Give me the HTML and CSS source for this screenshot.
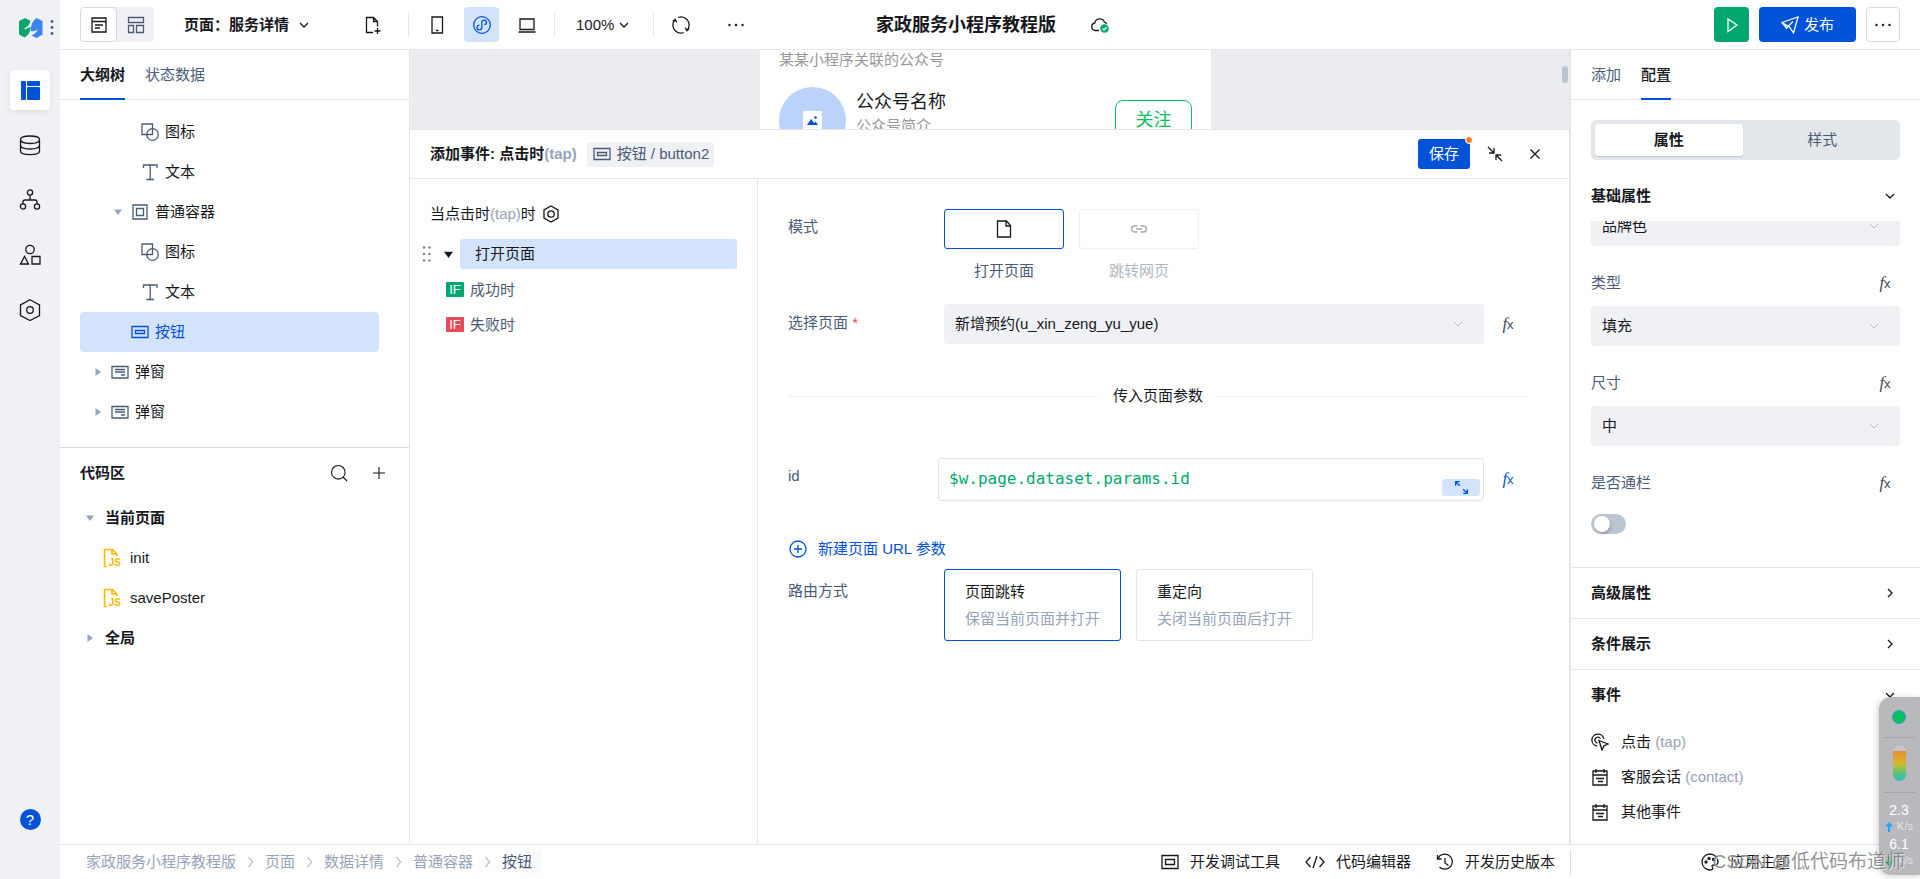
FILE: index.html
```html
<!DOCTYPE html>
<html lang="zh-CN">
<head>
<meta charset="utf-8">
<title>家政服务小程序教程版</title>
<link rel="stylesheet" href="styles.css">
</head>
<body>
<svg class="sprite" aria-hidden="true">
  <symbol id="chev-down" viewBox="0 0 10 10"><path d="M1 3l4 4 4-4"/></symbol>
  <symbol id="chev-right" viewBox="0 0 10 10"><path d="M3 1l4 4-4 4"/></symbol>
  <symbol id="crumb" viewBox="0 0 8 14"><path d="M2 2l4 5-4 5"/></symbol>
  <symbol id="caret-down" viewBox="0 0 8 8"><path d="M0 1.500h8L4 7z" fill="currentColor" stroke="none"/></symbol>
  <symbol id="caret-right" viewBox="0 0 8 8"><path d="M1.500 0v8L7 4z" fill="currentColor" stroke="none"/></symbol>
  <symbol id="page" viewBox="0 0 18 18"><path d="M2 2h14v14H2zM2 5.500h14M5 9h8M5 12h5"/></symbol>
  <symbol id="blocks" viewBox="0 0 18 18"><path d="M1.500 1.500h15v5h-15zM1.500 9.500h5v7h-5zM9.500 9.500h7v7h-7z"/></symbol>
  <symbol id="file-plus" viewBox="0 0 18 18"><path d="M9 16.500H2.500v-15h7l4 4v5M9.500 1.500v4h4M13.500 12v6M10.500 15h6"/></symbol>
  <symbol id="phone" viewBox="0 0 18 18"><path d="M4 1h10.500v16H4zM8 14.500h2.500"/></symbol>
  <symbol id="mini" viewBox="0 0 18 18"><circle cx="9" cy="9" r="8.300"/><path d="M6.500 9.200c-1.700.2-2.500 1.200-2.500 2.200a2.300 2.300 0 0 0 4.800 0V6.500a2.300 2.300 0 0 1 4.700 0c0 1-.8 2-2.300 2.200"/></symbol>
  <symbol id="laptop" viewBox="0 0 18 18"><path d="M2 3h14v10.500H2zM.5 16h17"/></symbol>
  <symbol id="refresh" viewBox="0 0 18 18"><path d="M6 16.500A8 8 0 0 1 3 3.700M6.200 1.500a8 8 0 0 1 8.500 1.800M12 1.500a8 8 0 0 1 3 12.800M11.800 16.500a8 8 0 0 1-8.500-1.800M.8 5.500L3 3.400l1.800 3M17.200 12.500L15 14.600l-1.800-3"/></symbol>
  <symbol id="dots" viewBox="0 0 18 18"><g fill="currentColor" stroke="none"><circle cx="2.500" cy="9" r="1.200"/><circle cx="9" cy="9" r="1.200"/><circle cx="15.500" cy="9" r="1.200"/></g></symbol>
  <symbol id="cloud" viewBox="0 0 20 18"><path d="M9 14.500H5A3.800 3.800 0 0 1 4.800 7a5 5 0 0 1 9.600-.8 4 4 0 0 1 2.400 1.600"/><circle cx="14.500" cy="12.500" r="4.300" fill="#00a870" stroke="none"/><path d="M12.500 12.500l1.500 1.500 2.700-2.700" stroke="#fff"/></symbol>
  <symbol id="play" viewBox="0 0 18 18"><path d="M5 3l9 6-9 6.500z"/></symbol>
  <symbol id="send" viewBox="0 0 18 18"><path d="M1 6.500L17 1l-4.500 16L8.500 11zM1 6.500l4.500 5.500 6.500-6.500M5.500 12v1"/></symbol>
  <symbol id="db" viewBox="0 0 22 22"><path d="M1.500 5.500C1.500 3 5 2 11 2s9.500 1 9.500 3.500S17 9.500 11 9.500 1.500 8 1.500 5.500zM1.500 5.500V17c0 2.500 3.500 3.700 9.500 3.700s9.500-1.200 9.500-3.700V5.500M1.500 11c0 2.500 3.500 4 9.500 4s9.500-1.500 9.500-4"/></symbol>
  <symbol id="flow" viewBox="0 0 22 22"><circle cx="11" cy="3.500" r="2.600"/><circle cx="4" cy="17.500" r="2.600"/><circle cx="18" cy="17.500" r="2.600"/><path d="M11 6v5M4 15v-2q0-2 2-2h10q2 0 2 2v2"/></symbol>
  <symbol id="shapes" viewBox="0 0 22 22"><circle cx="11" cy="5.500" r="4.200"/><path d="M1.500 20l4-7.500 4 7.500zM13 12.500h8V20h-8z"/></symbol>
  <symbol id="hex" viewBox="0 0 22 22"><path d="M11 .8l9.500 5.200v10.500L11 21.500 1.500 16.500V6z"/><circle cx="11" cy="11" r="3.300"/></symbol>
  <symbol id="hex-bold" viewBox="0 0 18 18"><path d="M9 1l7 4v8l-7 4-7-4V5z"/><circle cx="9" cy="9" r="3.200"/></symbol>
  <symbol id="icon-item" viewBox="0 0 18 18"><path d="M6 11.500H1V1h10.500v4"/><circle cx="11.500" cy="11.500" r="5.800"/><path d="M11.500 5v6.500H6"/></symbol>
  <symbol id="text-item" viewBox="0 0 18 18"><path d="M2.500 5V2h13.500v3M9.200 2v14.500M5.500 16.500h7.500"/></symbol>
  <symbol id="box-item" viewBox="0 0 18 18"><path d="M2 2h14v14H2zM5.500 5.500h7v7h-7z"/></symbol>
  <symbol id="button-item" viewBox="0 0 18 18"><path d="M1 3.500h16v11H1zM4.500 7.500h9v3h-9z"/></symbol>
  <symbol id="tool-item" viewBox="0 0 18 18"><path d="M1 2.500h16v13H1zM4.500 6.500h9v5h-9z"/></symbol>
  <symbol id="popup-item" viewBox="0 0 18 18"><path d="M1 3.500h16v11.500H1zM4 6.500h10M4 9h10M10 12h4"/></symbol>
  <symbol id="search" viewBox="0 0 18 18"><circle cx="8.300" cy="8.300" r="6.800"/><path d="M13 13l4 4"/></symbol>
  <symbol id="plus" viewBox="0 0 18 18"><path d="M9 3v12M3 9h12"/></symbol>
  <symbol id="plus-circle" viewBox="0 0 18 18"><circle cx="9" cy="9" r="8"/><path d="M9 5v8M5 9h8"/></symbol>
  <symbol id="script" viewBox="0 0 18 20"><path d="M5 18.500H2.500v-17h8L15 6v2M10 1.500V6h5"/></symbol>
  <symbol id="drag" viewBox="0 0 10 18"><g fill="currentColor" stroke="none"><circle cx="2" cy="2.500" r="1.300"/><circle cx="7.500" cy="2.500" r="1.300"/><circle cx="2" cy="9" r="1.300"/><circle cx="7.500" cy="9" r="1.300"/><circle cx="2" cy="15.500" r="1.300"/><circle cx="7.500" cy="15.500" r="1.300"/></g></symbol>
  <symbol id="collapse" viewBox="0 0 18 18"><path d="M2 2l6 6M8 3v5H3M16 16l-6-6M10 15v-5h5"/></symbol>
  <symbol id="expand" viewBox="0 0 18 18"><path d="M2 2l5 5M2 7V2h5M16 16l-5-5M16 11v5h-5"/></symbol>
  <symbol id="close" viewBox="0 0 18 18"><path d="M4.500 4.500l9 9M13.500 4.500l-9 9"/></symbol>
  <symbol id="file" viewBox="0 0 18 18"><path d="M2.500 1h9l4 4.500V17h-13zM11 1v5h4.500"/></symbol>
  <symbol id="link" viewBox="0 0 18 18"><path d="M7.500 12h-3a3 3 0 0 1 0-6h3M10.500 6h3a3 3 0 0 1 0 6h-3M6 9h6"/></symbol>
  <symbol id="tap" viewBox="0 0 18 18"><path d="M8 7.500l9 3.500-4 1.800-2 4.200zM6 13A6 6 0 1 1 12.800 6M6.500 10A3 3 0 1 1 9.500 5.500"/></symbol>
  <symbol id="calendar" viewBox="0 0 18 18"><path d="M2 3h14v14H2zM2 7h14M5 1v4M13 1v4M5 10.500h8M7 13.500h5"/></symbol>
  <symbol id="code" viewBox="0 0 20 18"><path d="M5.500 4L1 9l4.500 5M14.500 4L19 9l-4.500 5M12 3L8 15"/></symbol>
  <symbol id="history" viewBox="0 0 18 18"><path d="M2 5.500A7.500 7.500 0 1 1 3.500 14M1.500 2v4h4M9 5v5l3.500 2.500"/></symbol>
  <symbol id="palette" viewBox="0 0 18 18"><path d="M9 17A8 8 0 1 1 17 9c0 3-2 3-4 3s-2.500 1-1.500 2.500S11 17 9 17z"/><circle cx="5" cy="9" r="1"/><circle cx="8" cy="5.500" r="1"/><circle cx="12.500" cy="6.500" r="1"/></symbol>
</svg>

<div class="app">
  <nav class="rail" aria-label="主导航">
    <div class="rail-logo">
      <svg class="logo" viewBox="0 0 24 20"><path d="M6 0l5 2.500c.6 3.500-2 6-6.500 8.500 2.500 0 4.500-.6 7-2.500.5 5-2 8-5.500 11L0 16.500V3z" fill="#0aa66b"/><path d="M17.500 0L23.500 3v13.500L17.500 20l-5-2.500c2.500-1 5.500-3.500 6.500-6-2.500 1.500-4.500 2-7 1.500C11.500 7.500 13.500 3 17.500 0z" fill="#3d83f2"/></svg>
      <svg class="logo-dots" viewBox="0 0 4 18"><circle cx="2" cy="2.500" r="1.400"/><circle cx="2" cy="8.500" r="1.400"/><circle cx="2" cy="14.500" r="1.400"/></svg>
    </div>
    <button class="rail-btn rail-active" aria-label="页面"><svg viewBox="0 0 19 19"><rect width="5" height="19" rx="1"/><rect x="6" width="13" height="5" rx="1"/><rect x="6" y="6" width="13" height="13" rx="1"/></svg></button>
    <button class="rail-btn" aria-label="数据"><svg class="ic ic-22"><use href="#db"/></svg></button>
    <button class="rail-btn" aria-label="流程"><svg class="ic ic-22"><use href="#flow"/></svg></button>
    <button class="rail-btn" aria-label="组件"><svg class="ic ic-22"><use href="#shapes"/></svg></button>
    <button class="rail-btn" aria-label="设置"><svg class="ic ic-22"><use href="#hex"/></svg></button>
    <button class="help" aria-label="帮助">?</button>
  </nav>

  <header class="topbar">
    <div class="top-left">
      <div class="view-switch">
        <button class="switch-btn switch-on" aria-label="页面视图"><svg class="ic"><use href="#page"/></svg></button>
        <button class="switch-btn" aria-label="布局视图"><svg class="ic"><use href="#blocks"/></svg></button>
      </div>
      <button class="page-pick"><span>页面：服务详情</span><svg class="ic ic-10"><use href="#chev-down"/></svg></button>
      <button class="tool" aria-label="新建页面"><svg class="ic"><use href="#file-plus"/></svg></button>
      <span class="sep"></span>
      <div class="devices">
        <button class="tool" aria-label="手机"><svg class="ic"><use href="#phone"/></svg></button>
        <button class="tool tool-on" aria-label="小程序"><svg class="ic"><use href="#mini"/></svg></button>
        <button class="tool" aria-label="电脑"><svg class="ic"><use href="#laptop"/></svg></button>
      </div>
      <span class="sep"></span>
      <button class="zoom-pick"><span>100%</span><svg class="ic ic-10"><use href="#chev-down"/></svg></button>
      <span class="sep"></span>
      <div class="top-extra">
        <button class="tool" aria-label="刷新"><svg class="ic"><use href="#refresh"/></svg></button>
        <button class="tool" aria-label="更多"><svg class="ic"><use href="#dots"/></svg></button>
      </div>
    </div>
    <div class="top-title"><h1>家政服务小程序教程版</h1><svg class="ic ic-cloud"><use href="#cloud"/></svg></div>
    <div class="top-right">
      <button class="btn-run" aria-label="运行"><svg class="ic"><use href="#play"/></svg></button>
      <button class="btn-publish"><svg class="ic"><use href="#send"/></svg>发布</button>
      <button class="btn-more" aria-label="更多"><svg class="ic"><use href="#dots"/></svg></button>
    </div>
  </header>

  <aside class="outline">
    <div class="tabs"><button class="tab tab-on">大纲树</button><button class="tab">状态数据</button></div>
    <ul class="tree">
      <li class="node lv3"><span class="caret"></span><svg class="ic"><use href="#icon-item"/></svg>图标</li>
      <li class="node lv3"><span class="caret"></span><svg class="ic"><use href="#text-item"/></svg>文本</li>
      <li class="node lv2"><svg class="caret"><use href="#caret-down"/></svg><svg class="ic"><use href="#box-item"/></svg>普通容器</li>
      <li class="node lv3"><span class="caret"></span><svg class="ic"><use href="#icon-item"/></svg>图标</li>
      <li class="node lv3"><span class="caret"></span><svg class="ic"><use href="#text-item"/></svg>文本</li>
      <li class="node lv2 node-on"><span class="caret"></span><svg class="ic"><use href="#button-item"/></svg>按钮</li>
      <li class="node lv1"><svg class="caret"><use href="#caret-right"/></svg><svg class="ic"><use href="#popup-item"/></svg>弹窗</li>
      <li class="node lv1"><svg class="caret"><use href="#caret-right"/></svg><svg class="ic"><use href="#popup-item"/></svg>弹窗</li>
    </ul>
    <section class="code-area">
      <div class="code-head"><h2>代码区</h2>
        <button class="plain" aria-label="搜索"><svg class="ic ic-thin"><use href="#search"/></svg></button>
        <button class="plain" aria-label="新增"><svg class="ic ic-thin"><use href="#plus"/></svg></button>
      </div>
      <ul class="code-list">
        <li class="code-group"><svg class="caret"><use href="#caret-down"/></svg>当前页面</li>
        <li class="code-file"><span class="js"><svg class="ic ic-js"><use href="#script"/></svg><small>JS</small></span>init</li>
        <li class="code-file"><span class="js"><svg class="ic ic-js"><use href="#script"/></svg><small>JS</small></span>savePoster</li>
        <li class="code-group"><svg class="caret"><use href="#caret-right"/></svg>全局</li>
      </ul>
    </section>
  </aside>

  <main class="center">
    <div class="canvas">
      <div class="preview">
        <p class="preview-tip">某某小程序关联的公众号</p>
        <div class="account">
          <div class="avatar"><svg viewBox="0 0 19 19"><rect width="19" height="19" rx="1" fill="#fff"/><path d="M4 14l4-6 3 4 1.500-1.500L15 14z" fill="#0052d9"/><circle cx="12.500" cy="6.500" r="1.300" fill="#0052d9"/></svg></div>
          <div class="account-text"><strong>公众号名称</strong><span>公众号简介</span></div>
          <button class="follow">关注</button>
        </div>
      </div>
      <span class="scroll-thumb"></span>
    </div>

    <section class="event">
      <div class="event-head">
        <h2>添加事件: 点击时<span class="muted">(tap)</span></h2>
        <span class="chip"><svg class="ic"><use href="#button-item"/></svg>按钮 / button2</span>
        <button class="btn-save">保存<span class="dot"></span></button>
        <div class="event-tools">
          <button class="plain" aria-label="收起"><svg class="ic"><use href="#collapse"/></svg></button>
          <button class="plain" aria-label="关闭"><svg class="ic"><use href="#close"/></svg></button>
        </div>
      </div>
      <div class="event-body">
        <div class="steps">
          <div class="steps-title"><span>当点击时<span class="muted">(tap)</span>时</span><svg class="ic"><use href="#hex-bold"/></svg></div>
          <div class="step"><svg class="drag"><use href="#drag"/></svg><svg class="step-caret"><use href="#caret-down"/></svg><button class="step-name">打开页面</button></div>
          <div class="branch"><span class="if if-ok">IF</span>成功时</div>
          <div class="branch"><span class="if if-fail">IF</span>失败时</div>
        </div>
        <form class="form">
          <div class="row">
            <span class="label">模式</span>
            <div class="modes">
              <div class="mode"><button type="button" class="mode-btn mode-on" aria-labelledby="m1"><svg class="ic"><use href="#file"/></svg></button><span id="m1">打开页面</span></div>
              <div class="mode mode-off"><button type="button" class="mode-btn" aria-labelledby="m2" disabled><svg class="ic"><use href="#link"/></svg></button><span id="m2">跳转网页</span></div>
            </div>
          </div>
          <div class="row row-select">
            <label class="label" for="target">选择页面 <span class="req">*</span></label>
            <div class="control">
              <div class="select"><select id="target"><option>新增预约(u_xin_zeng_yu_yue)</option></select><svg class="ic ic-10"><use href="#chev-down"/></svg></div>
              <button type="button" class="fx" aria-label="表达式">f<small>x</small></button>
            </div>
          </div>
          <div class="divider"><span>传入页面参数</span></div>
          <div class="row">
            <label class="label" for="param">id</label>
            <div class="control control-code">
              <div class="code-box"><input id="param" value="$w.page.dataset.params.id"><button type="button" class="expand" aria-label="展开"><svg class="ic"><use href="#expand"/></svg></button></div>
              <button type="button" class="fx fx-on" aria-label="表达式">f<small>x</small></button>
            </div>
          </div>
          <button type="button" class="add-param"><svg class="ic"><use href="#plus-circle"/></svg>新建页面 URL 参数</button>
          <div class="row row-route">
            <span class="label">路由方式</span>
            <div class="routes">
              <button type="button" class="route route-on">页面跳转<span>保留当前页面并打开</span></button>
              <button type="button" class="route">重定向<span>关闭当前页面后打开</span></button>
            </div>
          </div>
        </form>
      </div>
    </section>
  </main>

  <aside class="config">
    <div class="tabs"><button class="tab">添加</button><button class="tab tab-on">配置</button></div>
    <div class="segment"><button class="seg seg-on">属性</button><button class="seg">样式</button></div>
    <button class="section-head section-open">基础属性<svg class="ic ic-10"><use href="#chev-down"/></svg></button>
    <div class="props">
      <div class="select select-cut"><select aria-label="风格"><option>品牌色</option></select><svg class="ic ic-10"><use href="#chev-down"/></svg></div>
      <div class="prop-head"><label for="kind">类型</label><button class="fx" aria-label="表达式">f<small>x</small></button></div>
      <div class="select"><select id="kind"><option>填充</option></select><svg class="ic ic-10"><use href="#chev-down"/></svg></div>
      <div class="prop-head"><label for="size">尺寸</label><button class="fx" aria-label="表达式">f<small>x</small></button></div>
      <div class="select"><select id="size"><option>中</option></select><svg class="ic ic-10"><use href="#chev-down"/></svg></div>
      <div class="prop-head"><label for="block">是否通栏</label><button class="fx" aria-label="表达式">f<small>x</small></button></div>
      <input type="checkbox" id="block" class="toggle">
    </div>
    <button class="section-head">高级属性<svg class="ic ic-10"><use href="#chev-right"/></svg></button>
    <button class="section-head">条件展示<svg class="ic ic-10"><use href="#chev-right"/></svg></button>
    <button class="section-head">事件<svg class="ic ic-10"><use href="#chev-down"/></svg></button>
    <ul class="events">
      <li><svg class="ic"><use href="#tap"/></svg><span>点击 <span class="muted">(tap)</span></span></li>
      <li><svg class="ic"><use href="#calendar"/></svg><span>客服会话 <span class="muted">(contact)</span></span></li>
      <li><svg class="ic"><use href="#calendar"/></svg><span>其他事件</span></li>
    </ul>
  </aside>

  <footer class="bottom">
    <nav class="crumbs" aria-label="路径">
      <a href="#">家政服务小程序教程版</a><svg class="ic ic-crumb"><use href="#crumb"/></svg>
      <a href="#">页面</a><svg class="ic ic-crumb"><use href="#crumb"/></svg>
      <a href="#">数据详情</a><svg class="ic ic-crumb"><use href="#crumb"/></svg>
      <a href="#">普通容器</a><svg class="ic ic-crumb"><use href="#crumb"/></svg>
      <a href="#" class="crumb-on">按钮</a>
    </nav>
    <div class="bottom-tools">
      <button class="link-btn"><svg class="ic"><use href="#tool-item"/></svg>开发调试工具</button>
      <button class="link-btn"><svg class="ic ic-code"><use href="#code"/></svg>代码编辑器</button>
      <button class="link-btn"><svg class="ic"><use href="#history"/></svg>开发历史版本</button>
    </div>
    <div class="bottom-theme"><button class="link-btn"><svg class="ic"><use href="#palette"/></svg>应用主题</button></div>
  </footer>
</div>

<div class="monitor">
  <span class="mon-led"></span>
  <span class="mon-line"></span>
  <span class="mon-bar"></span>
  <span class="mon-line"></span>
  <span class="mon-num">2.3</span>
  <span class="mon-unit"><svg class="mon-up" viewBox="0 0 8 10"><path d="M4 0l4 4.500H5V10H3V4.500H0z"/></svg>K/s</span>
  <span class="mon-num mon-second">6.1</span>
  <span class="mon-unit"><svg class="mon-down" viewBox="0 0 8 10"><path d="M4 10l4-4.500H5V0H3v5.500H0z"/></svg>K/s</span>
</div>
<div class="watermark">CSDN @低代码布道师</div>
</body>
</html>
```
FILE: styles.css
```css
* { box-sizing: border-box; }

:root {
  --blue: #0052d9;
  --green: #00a870;
  --soft: #d4e3fc;
  --fill: #f0f1f5;
  --line: #e3e6eb;
  --ink: #16181d;
  --slate: #4b5b76;
  --mute: #97a3b7;
}

body {
  margin: 0;
  height: 100vh;
  overflow: hidden;
  color: var(--ink);
  font: 15px/22px "Liberation Sans", "Noto Sans CJK SC", sans-serif;
}

button, select, input {
  margin: 0;
  padding: 0;
  border: 0;
  background: none;
  color: inherit;
  font: inherit;
}

h1, h2, p, ul { margin: 0; padding: 0; }
h2 { font-size: 15px; line-height: 22px; }
ul { list-style: none; }
a { color: inherit; text-decoration: none; }
.sprite { position: absolute; width: 0; height: 0; }

.ic {
  flex: none;
  width: 18px;
  height: 18px;
  fill: none;
  stroke: currentColor;
  stroke-width: 1.3;
}
.ic-10 { width: 10px; height: 10px; }
.ic-22 { width: 22px; height: 22px; }
.ic-thin { stroke-width: 1.1; }
.muted { color: var(--mute); }
.plain { display: flex; }

.app {
  display: grid;
  height: 100%;
  grid-template: 50px minmax(0, 1fr) 35px / 60px 350px minmax(0, 1fr) 350px;
  grid-template-areas: "rail top top top" "rail outline center config" "rail bottom bottom bottom";
}

/* Rail */
.rail {
  grid-area: rail;
  display: flex;
  flex-direction: column;
  align-items: center;
  gap: 15px;
  padding-bottom: 49px;
  background: var(--fill);
}
.rail-logo { display: flex; align-items: center; gap: 7px; height: 55px; padding-left: 12px; }
.logo { width: 24px; height: 20px; }
.logo-dots { width: 4px; height: 18px; fill: var(--slate); }
.rail-btn { display: grid; place-items: center; width: 40px; height: 40px; border-radius: 4px; }
.rail-active { background: #fff; box-shadow: 0 2px 6px rgba(0, 0, 0, .08); fill: var(--blue); }
.rail-active svg { width: 19px; height: 19px; }
.help {
  width: 21px;
  height: 21px;
  margin-top: auto;
  border-radius: 50%;
  background: var(--blue);
  color: #fff;
  font-size: 15px;
  line-height: 21px;
}

/* Top bar */
.topbar {
  grid-area: top;
  display: grid;
  grid-template-columns: 1fr auto 1fr;
  align-items: center;
  padding: 0 20px;
  border-bottom: 1px solid var(--line);
}
.top-left, .top-right, .top-title, .view-switch, .devices, .top-extra { display: flex; align-items: center; }
.view-switch { border-radius: 4px; background: var(--fill); }
.switch-btn { display: grid; place-items: center; width: 37px; height: 35px; border-radius: 4px; color: var(--slate); }
.switch-on { border: 1px solid #d5dae3; background: #fff; color: var(--ink); }
.page-pick, .zoom-pick { display: flex; align-items: center; gap: 10px; }
.page-pick { margin: 0 46px 0 30px; font-weight: 600; }
.zoom-pick { gap: 5px; margin: 0 24px 0 21px; }
.tool { display: grid; place-items: center; width: 35px; height: 35px; border-radius: 4px; }
.tool-on { background: var(--soft); color: var(--blue); }
.sep { width: 1px; height: 24px; background: var(--line); }
.top-left > .tool { margin-right: 18px; }
.devices { gap: 10px; margin: 0 10px; }
.top-extra { gap: 20px; margin-left: 9px; }
.top-title { gap: 34px; padding-left: 6px; }
.top-title h1 { font-size: 18px; line-height: 24px; }
.ic-cloud { width: 20px; }
.top-right { justify-content: flex-end; gap: 10px; }
.btn-run, .btn-publish, .btn-more { display: flex; align-items: center; justify-content: center; height: 35px; border-radius: 4px; }
.btn-run { width: 35px; background: var(--green); color: #fff; }
.btn-publish { gap: 5px; width: 97px; background: var(--blue); color: #fff; }
.btn-more { width: 34px; border: 1px solid #d5dae3; }

/* Tabs shared by both side panels */
.tabs { display: flex; gap: 20px; height: 50px; padding: 0 20px; border-bottom: 1px solid var(--line); }
.tab { height: 50px; padding-top: 2px; border-bottom: 2px solid transparent; color: var(--slate); }
.tab-on { border-color: var(--blue); color: var(--ink); font-weight: 600; }
.config .tab-on { font-weight: 500; }

/* Outline panel */
.outline { grid-area: outline; border-right: 1px solid var(--line); }
.tree { padding: 12px 30px 15px 20px; border-bottom: 1px solid #d5dae3; }
.node { display: flex; align-items: center; height: 40px; border-radius: 4px; }
.node .ic { margin: 0 6px 0 5px; color: var(--slate); }
.node-on { background: var(--soft); color: var(--blue); }
.node-on .ic { color: inherit; }
.caret { flex: none; width: 16px; height: 8px; color: var(--mute); }
.lv1 { padding-left: 10px; }
.lv2 { padding-left: 30px; }
.lv3 { padding-left: 40px; }
.code-head { display: flex; align-items: center; gap: 22px; height: 50px; padding: 0 21px 0 20px; }
.code-head h2 { margin-right: auto; }
.code-list li { display: flex; align-items: center; height: 40px; }
.code-group { gap: 7px; padding-left: 22px; font-weight: 600; }
.code-file { gap: 9px; padding-left: 42px; }
.js { position: relative; display: flex; width: 19px; color: #ffb700; }
.js small { position: absolute; right: 0; bottom: 0; font-size: 10px; font-weight: 700; line-height: 10px; }
.ic-js { width: 18px; height: 20px; stroke-width: 1.6; }

/* Canvas preview */
.center { grid-area: center; display: flex; flex-direction: column; min-width: 0; border-right: 1px solid var(--line); }
.canvas { position: relative; flex: none; height: 79px; padding-right: 8px; overflow: hidden; background: #ebecf0; }
.preview { width: 451px; height: 160px; margin: 0 auto; padding: 0 19px; background: #fff; }
.preview-tip { color: #999; line-height: 20px; }
.account { display: flex; margin-top: 17px; }
.avatar { display: grid; place-items: center; width: 67px; height: 67px; margin-right: 10px; border-radius: 50%; background: #bbd3fb; }
.avatar svg { width: 19px; height: 19px; }
.account-text { display: flex; flex-direction: column; flex: 1; padding-top: 2px; color: #999; }
.account-text strong { color: var(--ink); font-size: 18px; font-weight: 400; line-height: 26px; }
.follow { width: 77px; height: 40px; margin-top: 13px; border: 1px solid #07c160; border-radius: 8px; color: #07c160; font-size: 18px; }
.scroll-thumb { position: absolute; top: 16px; right: 1px; width: 6px; height: 17px; border-radius: 3px; background: #bbc4d1; }

/* Event editor */
.event { display: flex; flex: 1; flex-direction: column; min-height: 0; border-top: 1px solid var(--line); }
.event-head { display: flex; align-items: center; height: 49px; padding: 0 25px 0 20px; border-bottom: 1px solid var(--line); }
.chip { display: flex; align-items: center; gap: 6px; height: 25px; margin-left: 10px; padding: 0 5px 0 6px; border-radius: 3px; background: var(--fill); color: var(--slate); }
.btn-save { position: relative; width: 52px; height: 30px; margin-left: auto; border-radius: 3px; background: var(--blue); color: #fff; }
.dot { position: absolute; top: -3px; right: -3px; width: 8px; height: 8px; border: 1px solid #fff; border-radius: 50%; background: #ed7b2f; }
.event-tools { display: flex; gap: 22px; margin-left: 16px; }
.event-body { display: flex; flex: 1; }
.steps { flex: none; width: 348px; padding: 20px 20px 0; border-right: 1px solid var(--line); }
.steps-title { display: flex; align-items: center; gap: 6px; height: 30px; margin-bottom: 10px; }
.step { display: flex; align-items: center; margin: 0 0 3px -8px; }
.drag { width: 10px; height: 18px; color: #888; }
.step-caret { width: 9px; height: 9px; margin: 0 7px 0 12px; }
.step-name { flex: 1; height: 30px; padding-left: 15px; border-radius: 3px; background: var(--soft); text-align: left; }
.branch { display: flex; align-items: center; gap: 6px; height: 35px; padding-left: 16px; color: var(--slate); }
.if { width: 18px; height: 15px; border-radius: 1px; color: #fff; font-size: 13px; line-height: 15px; text-align: center; }
.if-ok { background: var(--green); }
.if-fail { background: #e34d59; }

.form { flex: 1; padding: 30px 41px 0 30px; }
.row { display: grid; grid-template-columns: 156px minmax(0, 1fr); }
.label { color: var(--slate); line-height: 36px; }
.row-select .label { line-height: 38px; }
.req { color: #e34d59; }
.modes, .routes { display: flex; gap: 15px; }
.mode { display: grid; gap: 11px; color: var(--slate); text-align: center; }
.mode-off { color: #b0b6c2; }
.mode-btn { display: grid; place-items: center; width: 120px; height: 40px; border: 1px solid #eeeff2; border-radius: 3px; color: #a3a8b2; }
.mode-on { border-color: var(--blue); color: var(--ink); }
.row-select { margin-top: 22px; }
.control { display: flex; gap: 4px; }
.select { display: flex; flex: 1; align-items: center; border-radius: 4px; background: var(--fill); }
.select select { flex: 1; height: 40px; padding: 0 11px; appearance: none; }
.select .ic { margin-right: 21px; color: #b5bcc8; stroke-width: 1; }
.fx { width: 40px; color: #444b57; font: italic 17px/20px "Liberation Serif", serif; }
.fx small { font: 13px/20px "Liberation Sans", sans-serif; }
.fx-on { color: var(--blue); }
.divider { display: flex; align-items: center; gap: 15px; margin: 40px 0 50px; line-height: 24px; }
.divider::before, .divider::after { content: ""; flex: 1; height: 1px; background: #eeeff2; }
.control-code { margin-left: -6px; }
.code-box { position: relative; display: flex; flex: 1; height: 43px; border: 1px solid #dfe2e8; border-radius: 3px; }
.code-box input { flex: 1; height: 38px; padding: 0 10px; color: var(--green); font: 16px "DejaVu Sans Mono", monospace; }
.expand { position: absolute; right: 3px; bottom: 4px; display: grid; place-items: center; width: 38px; height: 17px; border-radius: 3px; background: var(--soft); color: var(--blue); }
.expand .ic { width: 15px; height: 15px; stroke-width: 1.6; }
.add-param { display: flex; align-items: center; gap: 11px; margin: 36px 0 8px; padding-left: 1px; line-height: 24px; color: var(--blue); }
.row-route .label { line-height: 44px; }
.route { width: 177px; height: 72px; padding: 0 20px; border: 1px solid #e3e6eb; border-radius: 3px; line-height: 27px; text-align: left; }
.route span { display: block; color: var(--mute); white-space: nowrap; }
.route-on { border-color: var(--blue); }

/* Config panel */
.config { grid-area: config; overflow: hidden; border-left: 1px solid var(--line); }
.segment { display: flex; gap: 6px; height: 40px; margin: 20px 20px 10px; padding: 4px; border-radius: 5px; background: var(--line); }
.seg { flex: 1; color: var(--slate); }
.seg-on { border-radius: 3px; background: #fff; box-shadow: 0 1px 1px #bbc4d1; color: var(--ink); font-weight: 600; }
.section-head { display: flex; align-items: center; justify-content: space-between; width: 100%; height: 51px; padding: 0 25px 0 20px; border-top: 1px solid var(--line); font-weight: 600; }
.section-open { border-top-color: transparent; }
.props { height: 346px; padding: 0 20px; overflow: hidden; }
.select-cut { margin-top: -15px; }
.prop-head { display: flex; align-items: center; justify-content: space-between; height: 60px; padding-top: 14px; color: var(--slate); }
.prop-head .fx { width: 30px; }
.toggle { position: relative; display: block; width: 35px; height: 20px; margin-top: 8px; border-radius: 10px; background: #bbc4d1; appearance: none; }
.toggle::before { content: ""; position: absolute; top: 2px; left: 3px; width: 16px; height: 16px; border-radius: 50%; background: #fff; box-shadow: 1px 2px 3px rgba(0, 0, 0, .2); }
.events { padding: 4px 20px 0; }
.events li { display: flex; align-items: center; gap: 12px; height: 35px; }

/* Bottom bar */
.bottom { grid-area: bottom; display: grid; grid-template-columns: 1fr auto 350px; align-items: center; border-top: 1px solid var(--line); }
.crumbs { display: flex; align-items: center; gap: 10px; padding-left: 26px; color: var(--mute); }
.ic-crumb { width: 9px; height: 14px; color: #bbc4d1; }
.crumb-on { padding-right: 9px; background: linear-gradient(90deg, #fff, #f7f8fa); color: var(--slate); }
.bottom-tools { display: flex; gap: 25px; padding-right: 15px; }
.link-btn { display: flex; align-items: center; gap: 11px; }
.ic-code { width: 20px; }
.bottom-theme { display: flex; height: 25px; padding-left: 130px; border-left: 1px solid #d5dae3; }

/* Floating network monitor */
.monitor {
  position: absolute;
  right: 0;
  bottom: 4px;
  display: flex;
  flex-direction: column;
  align-items: center;
  width: 41px;
  height: 178px;
  padding: 13px 4px 0 3px;
  border-radius: 12px 0 0 12px;
  background: rgba(178, 179, 183, .92);
  box-shadow: -1px 1px 6px rgba(0, 0, 0, .2);
  color: #fff;
}
.mon-led { width: 14px; height: 14px; border: 1px solid #3c91c4; border-radius: 50%; background: #07c160; }
.mon-line { width: 33px; height: 1px; margin: 13px 0 7px; background: #a4a6ab; }
.mon-bar { width: 13px; height: 36px; border-radius: 7px; background: linear-gradient(#c4c5ca 0 6px, #ed8a2f 6px, #d6b82b 50%, #52c47c 80%, #35b8c4); }
.mon-bar + .mon-line { margin: 11px 0 8px; }
.mon-num { font-size: 14px; line-height: 19px; }
.mon-second { margin-top: 2px; }
.mon-unit { display: flex; align-items: center; gap: 4px; color: #e3e4e7; font-size: 11px; line-height: 13px; }
.mon-unit svg { width: 8px; height: 10px; }
.mon-up { fill: #1ba7ff; }
.mon-down { fill: #12a85b; }

.watermark {
  position: absolute;
  right: 15px;
  bottom: 4px;
  color: rgba(125, 127, 132, .85);
  font-size: 19px;
  line-height: 26px;
  text-shadow: 1px 1px 0 rgba(255, 255, 255, .6);
  pointer-events: none;
}
```
